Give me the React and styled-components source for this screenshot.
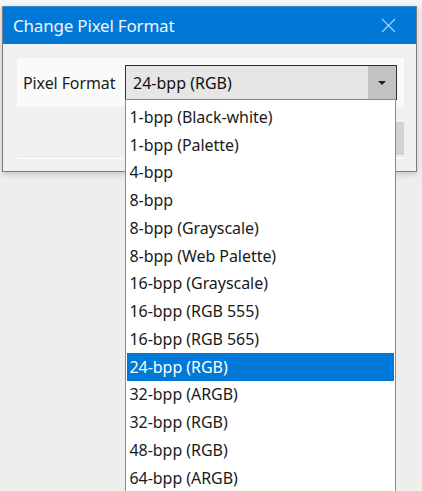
import React from 'react'
import styled, { createGlobalStyle } from 'styled-components'

const GlobalStyle = createGlobalStyle`
  html, body {
    margin: 0;
    padding: 0;
    background: #efeeed;
    overflow: hidden;
  }
  body {
    font-family: 'Noto Sans', 'Open Sans', sans-serif;
  }
`

const Page = styled.div`
  height: 491px;
  padding: 6px 0 0 2px;
  box-sizing: border-box;
  background: linear-gradient(#f6f5f5 0, #f6f5f5 6px, #efeeed 6px);
`

const Dialog = styled.div`
  width: 415px;
  box-sizing: border-box;
  border: 1px solid #7d7d7d;
  border-top-color: #3a8ad6;
  background: #f0f0f0;
  box-shadow: 0 2px 6px rgba(0, 0, 0, 0.18);
`

const TitleBar = styled.div`
  height: 37px;
  background: #0078d7;
  display: flex;
  align-items: center;
  justify-content: space-between;
  padding: 0 20px 0 10px;
`

const Title = styled.span`
  color: #eef6fd;
  font-size: 17px;
  letter-spacing: -0.2px;
`

const CloseIcon = () => (
  <svg width='15' height='15' viewBox='0 0 15 15'>
    <path d='M1 1 L14 14 M14 1 L1 14' stroke='#a9d4f5' strokeWidth='1.1' fill='none' />
  </svg>
)

const Body = styled.div`
  padding: 14px 12px 0 14px;
`

const Panel = styled.div`
  height: 49px;
  background: #fafafa;
  display: flex;
  align-items: center;
  padding: 0 7px 0 6px;
`

const Label = styled.span`
  font-size: 16px;
  color: #1c1c1c;
  width: 102px;
  letter-spacing: -0.1px;
`

const Combo = styled.div`
  position: relative;
  width: 272px;
  height: 35px;
  box-sizing: border-box;
  border: 1.5px solid #2e2e2e;
  background: #e6e6e6;
  display: flex;
  align-items: center;
`

const ComboText = styled.span`
  flex: 1;
  padding-left: 7px;
  font-size: 16px;
  color: #111;
`

const ComboButton = styled.div`
  width: 28px;
  align-self: stretch;
  background: #c2c2c2;
  display: flex;
  align-items: center;
  justify-content: center;
`

const Arrow = styled.div`
  width: 0;
  height: 0;
  border-left: 4px solid transparent;
  border-right: 4px solid transparent;
  border-top: 4px solid #222;
`

const List = styled.ul`
  position: absolute;
  top: 33px;
  left: -1.5px;
  width: 271px;
  margin: 0;
  padding: 3px 1px 2px;
  list-style: none;
  box-sizing: border-box;
  background: #fff;
  border: 1px solid #8a8a8a;
  z-index: 10;
`

const Item = styled.li`
  height: 27.75px;
  display: flex;
  align-items: center;
  padding-left: 3px;
  font-size: 16px;
  letter-spacing: -0.05px;
  color: ${p => (p.selected ? '#ffffff' : '#1a1a1a')};
  background: ${p => (p.selected ? '#0078d7' : 'transparent')};
`

const Footer = styled.div`
  height: 64px;
  display: flex;
  flex-direction: column;
`

const ButtonRow = styled.div`
  display: flex;
  justify-content: flex-end;
  padding-top: 15px;
`

const Button = styled.div`
  width: 80px;
  height: 33px;
  background: #d3d3d3;
`

const Separator = styled.div`
  margin-top: 3px;
  height: 1px;
  background: #ffffff;
`

const formats = [
  '1-bpp (Black-white)',
  '1-bpp (Palette)',
  '4-bpp',
  '8-bpp',
  '8-bpp (Grayscale)',
  '8-bpp (Web Palette)',
  '16-bpp (Grayscale)',
  '16-bpp (RGB 555)',
  '16-bpp (RGB 565)',
  '24-bpp (RGB)',
  '32-bpp (ARGB)',
  '32-bpp (RGB)',
  '48-bpp (RGB)',
  '64-bpp (ARGB)'
]

export default function App() {
  const current = '24-bpp (RGB)'
  return (
    <Page>
      <GlobalStyle />
      <Dialog>
        <TitleBar>
          <Title>Change Pixel Format</Title>
          <CloseIcon />
        </TitleBar>
        <Body>
          <Panel>
            <Label>Pixel Format</Label>
            <Combo>
              <ComboText>{current}</ComboText>
              <ComboButton>
                <Arrow />
              </ComboButton>
              <List>
                {formats.map(f => (
                  <Item key={f} selected={f === current}>{f}</Item>
                ))}
              </List>
            </Combo>
          </Panel>
          <Footer>
            <ButtonRow>
              <Button />
            </ButtonRow>
            <Separator />
          </Footer>
        </Body>
      </Dialog>
    </Page>
  )
}
